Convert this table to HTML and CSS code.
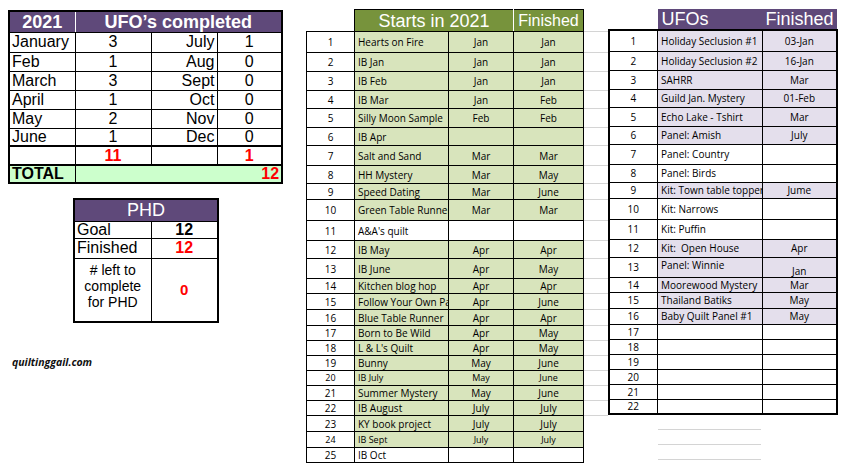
FILE: index.html
```html
<!DOCTYPE html>
<html>
<head>
<meta charset="utf-8">
<link rel="stylesheet" href="styles.css">
</head>
<body>
<div class="sheet">
  <div class="left">
    <table class="ufo">
      <colgroup><col class="w66"><col class="w76"><col class="w66"><col class="w65"></colgroup>
      <tr class="r21"><th class="hd sepw">2021</th><th class="hd" colspan="3">UFO’s completed</th></tr>
      <tr class="r20"><td class="ml">January</td><td class="c">3</td><td class="mr">July</td><td class="c">1</td></tr>
      <tr class="r19"><td class="ml">Feb</td><td class="c">1</td><td class="mr">Aug</td><td class="c">0</td></tr>
      <tr class="r19"><td class="ml">March</td><td class="c">3</td><td class="mr">Sept</td><td class="c">0</td></tr>
      <tr class="r19"><td class="ml">April</td><td class="c">1</td><td class="mr">Oct</td><td class="c">0</td></tr>
      <tr class="r19"><td class="ml">May</td><td class="c">2</td><td class="mr">Nov</td><td class="c">0</td></tr>
      <tr class="r18"><td class="ml">June</td><td class="c">1</td><td class="mr">Dec</td><td class="c">0</td></tr>
      <tr class="r19 thick"><td></td><td class="c red b">11</td><td></td><td class="c red b">1</td></tr>
      <tr class="r18 thick"><td class="ml b tot">TOTAL</td><td class="mr red b tot" colspan="3">12</td></tr>
    </table>

    <table class="phd">
      <colgroup><col class="w77"><col class="w67"></colgroup>
      <tr class="r22"><th class="hd2" colspan="2">PHD</th></tr>
      <tr class="r17"><td class="ml">Goal</td><td class="c b">12</td></tr>
      <tr class="r20"><td class="ml">Finished</td><td class="c b red">12</td></tr>
      <tr class="r64"><td class="note">#&nbsp;left to<br>complete<br>for PHD</td><td class="c b red small">0</td></tr>
    </table>

    <div class="site">quiltinggail.com</div>
  </div>

  <div class="mid">
    <table class="starts">
      <colgroup><col class="w48"><col class="w94"><col class="w65"><col class="w70"><col class="w24"></colgroup>
      <tr class="r22"><th class="blank"></th><th class="ghd big sepw" colspan="2">Starts in 2021</th><th class="ghd">Finished</th><th class="g"></th></tr>
      <tr class="r21 gr"><td class="n">1</td><td class="t">Hearts on Fire</td><td>Jan</td><td>Jan</td><td class="g"></td></tr>
      <tr class="r19 gr"><td class="n">2</td><td class="t">IB Jan</td><td>Jan</td><td>Jan</td><td class="g"></td></tr>
      <tr class="r19 gr"><td class="n">3</td><td class="t">IB Feb</td><td>Jan</td><td>Jan</td><td class="g"></td></tr>
      <tr class="r18 gr"><td class="n">4</td><td class="t">IB Mar</td><td>Jan</td><td>Feb</td><td class="g"></td></tr>
      <tr class="r19 gr"><td class="n">5</td><td class="t">Silly Moon Sample</td><td>Feb</td><td>Feb</td><td class="g"></td></tr>
      <tr class="r18 gr"><td class="n">6</td><td class="t">IB Apr</td><td></td><td></td><td class="g"></td></tr>
      <tr class="r20 gr"><td class="n">7</td><td class="t">Salt and Sand</td><td>Mar</td><td>Mar</td><td class="g"></td></tr>
      <tr class="r18 gr"><td class="n">8</td><td class="t">HH Mystery</td><td>Mar</td><td>May</td><td class="g"></td></tr>
      <tr class="r16 gr"><td class="n">9</td><td class="t">Speed Dating</td><td>Mar</td><td>June</td><td class="g"></td></tr>
      <tr class="r21 gr"><td class="n">10</td><td class="t">Green Table Runner</td><td>Mar</td><td>Mar</td><td class="g"></td></tr>
      <tr class="r20"><td class="n">11</td><td class="t">A&amp;A's quilt</td><td></td><td></td><td class="g"></td></tr>
      <tr class="r18 gr"><td class="n">12</td><td class="t">IB May</td><td>Apr</td><td>Apr</td><td class="g"></td></tr>
      <tr class="r20 gr"><td class="n">13</td><td class="t">IB June</td><td>Apr</td><td>May</td><td class="g"></td></tr>
      <tr class="r15 gr"><td class="n">14</td><td class="t">Kitchen blog hop</td><td>Apr</td><td>Apr</td><td class="g"></td></tr>
      <tr class="r16 gr"><td class="n">15</td><td class="t">Follow Your Own Path</td><td>Apr</td><td>June</td><td class="g"></td></tr>
      <tr class="r16 gr"><td class="n">16</td><td class="t">Blue Table Runner</td><td>Apr</td><td>Apr</td><td class="g"></td></tr>
      <tr class="r15 gr"><td class="n">17</td><td class="t">Born to Be Wild</td><td>Apr</td><td>May</td><td class="g"></td></tr>
      <tr class="r15 gr"><td class="n">18</td><td class="t">L &amp; L's Quilt</td><td>Apr</td><td>May</td><td class="g"></td></tr>
      <tr class="r15 gr"><td class="n">19</td><td class="t">Bunny</td><td>May</td><td>June</td><td class="g"></td></tr>
      <tr class="r15 gr sm"><td class="n">20</td><td class="t">IB July</td><td>May</td><td>June</td><td class="g"></td></tr>
      <tr class="r15 gr"><td class="n">21</td><td class="t">Summer Mystery</td><td>May</td><td>June</td><td class="g"></td></tr>
      <tr class="r15 gr"><td class="n">22</td><td class="t">IB August</td><td>July</td><td>July</td><td class="g"></td></tr>
      <tr class="r16 gr"><td class="n">23</td><td class="t">KY book project</td><td>July</td><td>July</td><td class="g0"></td></tr>
      <tr class="r16 gr sm"><td class="n">24</td><td class="t">IB Sept</td><td>July</td><td>July</td><td class="g0"></td></tr>
      <tr class="r15"><td class="n">25</td><td class="t">IB Oct</td><td></td><td></td><td class="g0"></td></tr>
    </table>
  </div>

  <div class="right">
    <table class="ufos">
      <colgroup><col class="w49"><col class="w105"><col class="w74"></colgroup>
      <thead>
        <tr class="r21"><th class="blank"></th><th class="phd-l">UFOs</th><th class="phd-r">Finished</th></tr>
      </thead>
      <tbody>
      <tr class="r21 lv"><td class="n">1</td><td class="t">Holiday Seclusion #1</td><td>03-Jan</td></tr>
      <tr class="r19 lv"><td class="n">2</td><td class="t">Holiday Seclusion #2</td><td>16-Jan</td></tr>
      <tr class="r19 lv"><td class="n">3</td><td class="t">SAHRR</td><td>Mar</td></tr>
      <tr class="r18 lv"><td class="n">4</td><td class="t">Guild Jan. Mystery</td><td>01-Feb</td></tr>
      <tr class="r19 lv"><td class="n">5</td><td class="t">Echo Lake - Tshirt</td><td>Mar</td></tr>
      <tr class="r18 lv"><td class="n">6</td><td class="t">Panel: Amish</td><td>July</td></tr>
      <tr class="r20"><td class="n">7</td><td class="t">Panel: Country</td><td></td></tr>
      <tr class="r18"><td class="n">8</td><td class="t">Panel: Birds</td><td></td></tr>
      <tr class="r16 lv"><td class="n">9</td><td class="t">Kit: Town table topper</td><td>Jume</td></tr>
      <tr class="r21"><td class="n">10</td><td class="t">Kit: Narrows</td><td></td></tr>
      <tr class="r20"><td class="n">11</td><td class="t">Kit: Puffin</td><td></td></tr>
      <tr class="r18 lv"><td class="n">12</td><td class="t">Kit:&nbsp; Open House</td><td>Apr</td></tr>
      <tr class="r20 lv"><td class="n">13</td><td class="t top">Panel: Winnie</td><td class="bot">Jan</td></tr>
      <tr class="r15 lv"><td class="n">14</td><td class="t">Moorewood Mystery</td><td>Mar</td></tr>
      <tr class="r16 lv"><td class="n">15</td><td class="t">Thailand Batiks</td><td>May</td></tr>
      <tr class="r16 lv"><td class="n">16</td><td class="t">Baby Quilt Panel #1</td><td>May</td></tr>
      <tr class="r15"><td class="n">17</td><td class="t"></td><td></td></tr>
      <tr class="r15"><td class="n">18</td><td class="t"></td><td></td></tr>
      <tr class="r15"><td class="n">19</td><td class="t"></td><td></td></tr>
      <tr class="r15"><td class="n">20</td><td class="t"></td><td></td></tr>
      <tr class="r15"><td class="n">21</td><td class="t"></td><td></td></tr>
      <tr class="r15"><td class="n">22</td><td class="t"></td><td></td></tr>
      </tbody>
    </table>
    <div class="gridlines">
      <div class="gl"></div>
      <div class="gl"></div>
      <div class="gl"></div>
    </div>
  </div>
</div>
</body>
</html>
```

FILE: styles.css
```css
* { box-sizing: border-box; }
html, body { margin: 0; padding: 0; background: #fff; }
body { font-family: "Liberation Sans", Arial, sans-serif; color: #000; width: 849px; height: 465px; overflow: hidden; }

.sheet { display: flex; align-items: flex-start; padding-top: 9px; }

table { border-collapse: collapse; table-layout: fixed; }
td, th { padding: 0; vertical-align: middle; white-space: nowrap; overflow: hidden; }

.w24 { width: 24px; } .w48 { width: 48px; } .w49 { width: 49px; }
.w65 { width: 65px; } .w66 { width: 66px; } .w67 { width: 67px; }
.w70 { width: 70px; } .w74 { width: 74px; } .w76 { width: 76px; }
.w77 { width: 77px; } .w94 { width: 94px; } .w105 { width: 105px; }

.r15 { height: 15px; } .r16 { height: 16px; } .r17 { height: 17px; }
.r18 { height: 18px; } .r19 { height: 19px; } .r20 { height: 20px; }
.r21 { height: 21px; } .r22 { height: 22px; } .r64 { height: 64px; }

/* ---------- left column ---------- */
.left { margin-left: 8px; width: 273px; padding-top: 1px; }

.ufo { width: 273px; border: 2px solid #000; font-size: 16px; line-height: 14px; }
.ufo td, .ufo th { border: 1px solid #000; }
.ufo .thick td { border-top: 2px solid #000; }
.hd { background: #5f497a; color: #fff; font-weight: bold; font-size: 18px; text-align: center; }
.sepw { border-right: 1px solid #fff !important; }
.ml { text-align: left; padding-left: 2px; }
.mr { text-align: right; padding-right: 2px; }
.c { text-align: center; }
.b { font-weight: bold; }
.red { color: #ff0000; }
.tot { background: #ccffcc; }

.phd { width: 144px; margin-left: 65px; margin-top: 14px; border: 2px solid #000; font-size: 16px; line-height: 14px; }
.phd td, .phd th { border: 1px solid #000; }
.hd2 { background: #5f497a; color: #fff; font-weight: normal; font-size: 18px; text-align: center; }
.note { font-size: 14px; line-height: 16px; text-align: center; vertical-align: top; padding-top: 3px; white-space: normal; }
.small { font-size: 15px; }

.site { margin: 32px 0 0 4px; font-family: "Open Sans", sans-serif; font-weight: bold; font-style: italic; font-size: 10.5px; color: #111; }

/* ---------- middle column ---------- */
.mid { margin-left: 25px; }
.starts { width: 301px; font-family: "Open Sans", sans-serif; font-size: 10px; line-height: 12px; }
.starts td, .starts th { border: 1px solid #000; text-align: center; }
.starts th.blank { border: none; }
.starts .ghd { background: #77933c; color: #fff; font-family: "Liberation Sans", Arial, sans-serif; font-weight: normal; font-size: 16px; }
.starts .ghd.big { font-size: 18px; }
.starts td.g, .starts th.g { border-top: none; border-right: none; border-left: none; border-bottom: 1px solid #d4d4d4; background: #fff; }
.starts td.g0 { border-top: none; border-right: none; border-left: none; border-bottom: none; background: #fff; }
.starts td.n { background: #fff; }
.starts td.t { text-align: left; padding-left: 3px; }
.gr td { background: #d8e4bc; }
.sm td { font-size: 9px; }

/* ---------- right column ---------- */
.ufos { width: 228px; font-family: "Open Sans", sans-serif; font-size: 10px; line-height: 12px; }
.ufos tbody { border: 2px solid #000; }
.ufos td { border: 1px solid #000; text-align: center; }
.ufos td.t { text-align: left; padding-left: 3px; }
.ufos th.blank { background: transparent; }
.phd-l, .phd-r { background: #5f497a; color: #fff; font-family: "Liberation Sans", Arial, sans-serif; font-weight: normal; font-size: 18px; }
.phd-l { text-align: left; padding-left: 4px; }
.phd-r { text-align: right; padding-right: 3px; }
.lv td { background: #e4dfec; }
.lv td.n { background: #fff; }
.ufos td.top { vertical-align: top; padding-top: 1px; }
.ufos td.bot { vertical-align: bottom; }

.gridlines { margin-left: 50px; width: 103px; }
.gl { height: 15px; border-bottom: 1px solid #d4d4d4; }
```
